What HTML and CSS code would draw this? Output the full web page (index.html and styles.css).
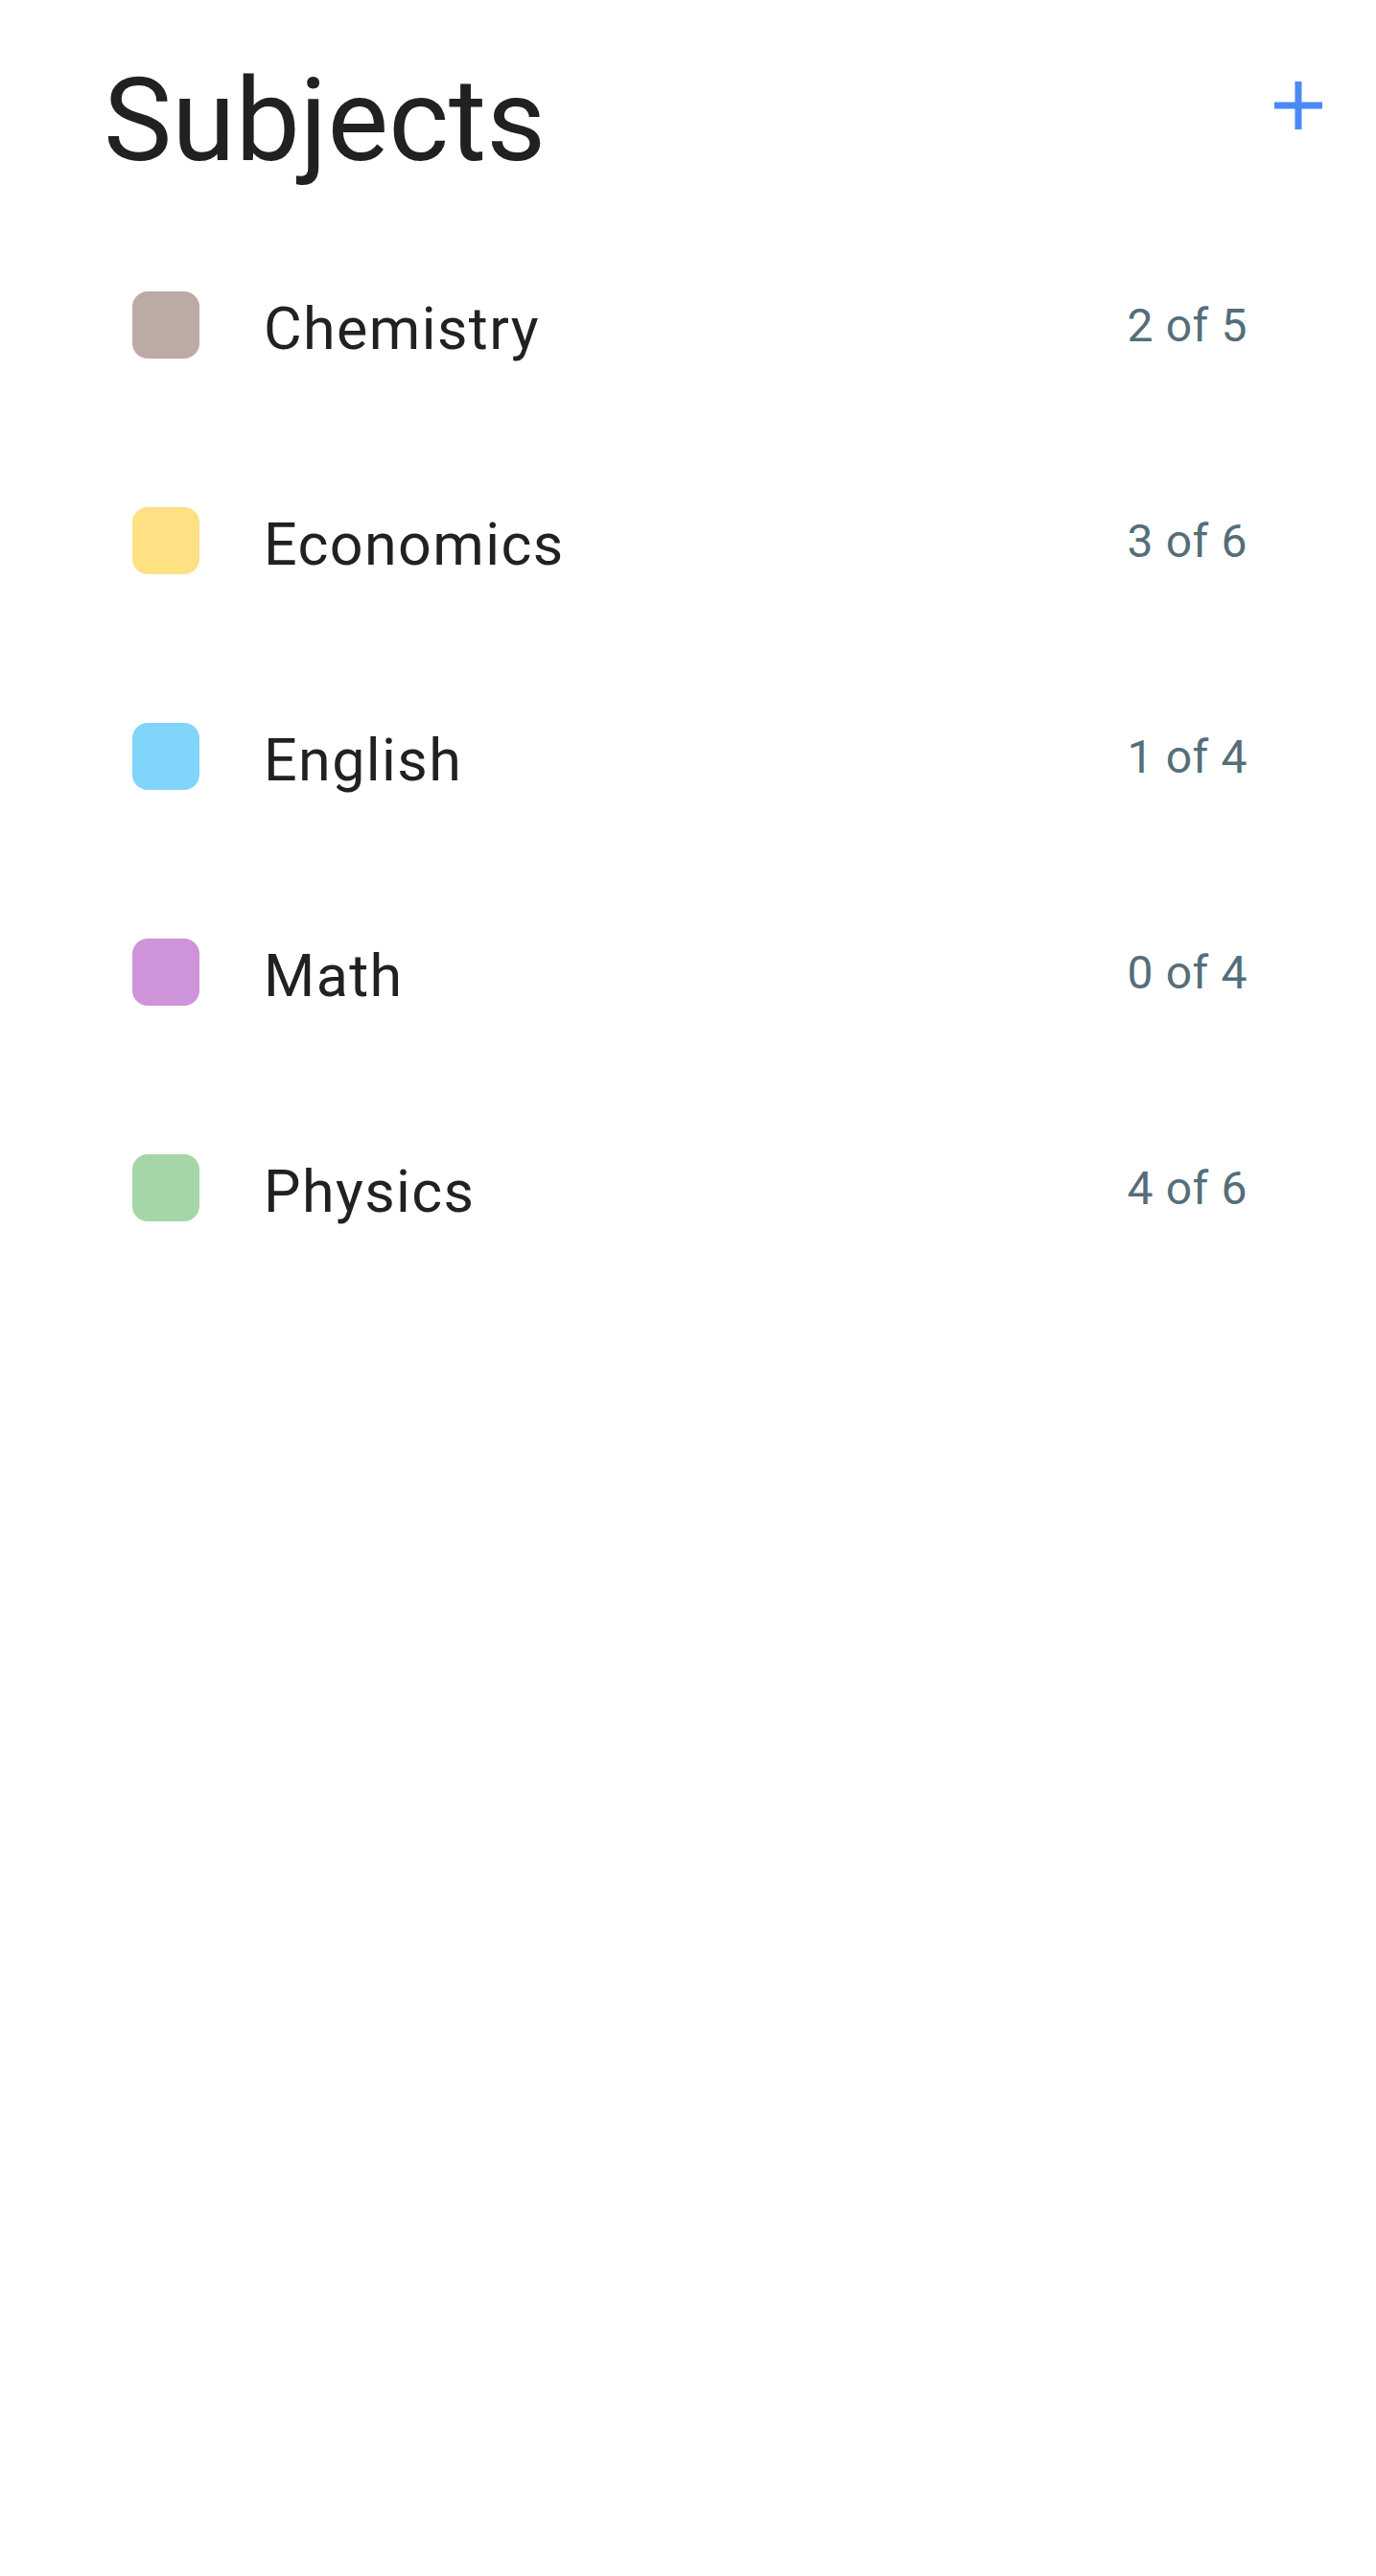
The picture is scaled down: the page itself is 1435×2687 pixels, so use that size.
FILE: index.html
```html
<!DOCTYPE html>
<html lang="en">
<head>
<meta charset="utf-8">
<title>Subjects</title>
<link rel="stylesheet" href="styles.css">
</head>
<body>
<div class="screen">
  <header class="header">
    <h1 class="title">Subjects</h1>
    <button class="add-btn" aria-label="Add subject">
      <svg width="50" height="50" viewBox="0 0 50 50"><path d="M25 0 V50 M0 25 H50" stroke="#4a8af4" stroke-width="7" fill="none"/></svg>
    </button>
  </header>
  <ul class="list">
    <li class="row"><span class="swatch swatch-chem"></span><span class="label">Chemistry</span><span class="count">2 of 5</span></li>
    <li class="row"><span class="swatch swatch-econ"></span><span class="label">Economics</span><span class="count">3 of 6</span></li>
    <li class="row"><span class="swatch swatch-eng"></span><span class="label">English</span><span class="count">1 of 4</span></li>
    <li class="row"><span class="swatch swatch-math"></span><span class="label">Math</span><span class="count">0 of 4</span></li>
    <li class="row"><span class="swatch swatch-phys"></span><span class="label">Physics</span><span class="count">4 of 6</span></li>
  </ul>
</div>
</body>
</html>
```
FILE: styles.css
```css
* { box-sizing: border-box; }
html, body {
  margin: 0;
  padding: 0;
  background: #ffffff;
}
body {
  font-family: Roboto, "Liberation Sans", Arial, sans-serif;
  color: #212121;
}
.screen {
  width: 1435px;
  min-height: 2687px;
}
.header {
  display: flex;
  justify-content: space-between;
  align-items: flex-start;
  padding: 56px 56px 0 108px;
}
.title {
  margin: 0;
  font-size: 120px;
  font-weight: 400;
  line-height: 140px;
  height: 140px;
  color: #212121;
}
.add-btn {
  margin-top: 29px;
  padding: 0;
  border: 0;
  background: none;
  width: 50px;
  height: 50px;
  display: block;
}
.add-btn svg { display: block; }
.list {
  list-style: none;
  margin: 30px 0 0 0;
  padding: 0;
}
.row {
  display: flex;
  align-items: center;
  height: 225px;
  padding: 0 134px 0 138px;
}
.swatch {
  flex: none;
  width: 70px;
  height: 70px;
  border-radius: 16px;
}
.swatch-chem { background: #bcaaa4; }
.swatch-econ { background: #ffe082; }
.swatch-eng { background: #81d4fa; }
.swatch-math { background: #ce93d8; }
.swatch-phys { background: #a5d6a7; }
.label {
  flex: 1;
  margin-left: 67px;
  font-size: 61px;
  letter-spacing: 1.4px;
  line-height: 70px;
  padding-top: 9px;
  color: #212121;
}
.count {
  font-size: 48px;
  letter-spacing: 0.6px;
  line-height: 56px;
  padding-top: 3px;
  color: #546e7a;
}
```
